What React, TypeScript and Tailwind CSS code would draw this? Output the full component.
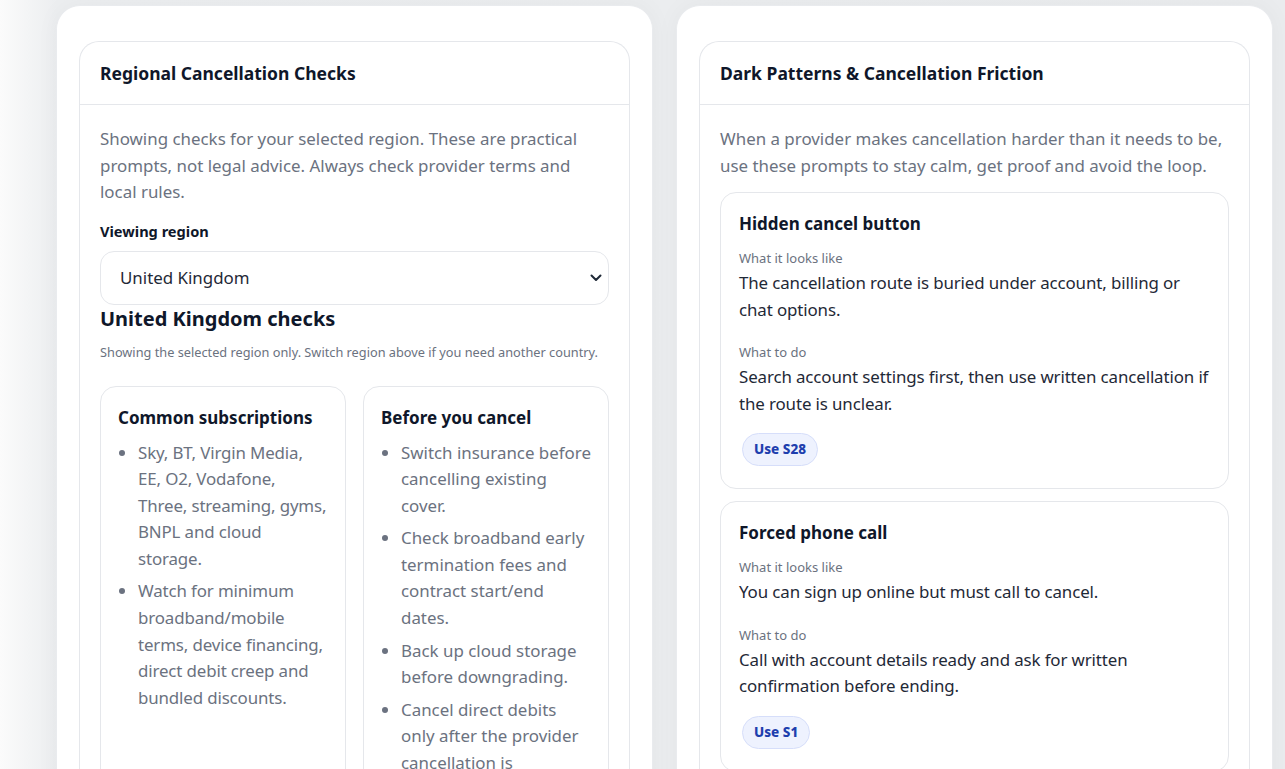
import React from "react";

const FONT = { fontFamily: '"Noto Sans", "Open Sans", Arial, sans-serif' };

function Chevron() {
  return (
    <svg width="12" height="8" viewBox="0 0 12 8" fill="none" className="shrink-0">
      <path d="M1.5 1.5 L6 6 L10.5 1.5" stroke="#1f2937" strokeWidth="2" strokeLinecap="round" strokeLinejoin="round" />
    </svg>
  );
}

function Badge({ label }: { label: string }) {
  return (
    <span className="ml-[3px] inline-flex h-[33px] items-center rounded-full border border-[#d6defa] bg-[#eef2fe] px-[11px] text-[13.5px] font-extrabold text-[#1e3fae]">
      {label}
    </span>
  );
}

function PatternCard({ title, looks, todo, badge }: { title: string; looks: string; todo: string; badge: string }) {
  return (
    <div className="rounded-[16px] border border-[#e5e7eb] bg-white px-[18px] pt-[19px] pb-[22px]">
      <h4 className="text-[17px] font-bold leading-[24px] text-[#0f172a]">{title}</h4>
      <div className="mt-[13px] text-[13px] leading-[18px] text-[#6b7280]">What it looks like</div>
      <p className="mt-[3px] text-[16.9px] leading-[26.5px] tracking-[-0.12px] text-[#1f2937]">{looks}</p>
      <div className="mt-[20px] text-[13px] leading-[18px] text-[#6b7280]">What to do</div>
      <p className="mt-[3px] text-[16.9px] leading-[26.5px] tracking-[-0.12px] text-[#1f2937]">{todo}</p>
      <div className="mt-[16px]">
        <Badge label={badge} />
      </div>
    </div>
  );
}

function ListCard({ title, items, tight }: { title: string; items: string[]; tight?: boolean }) {
  return (
    <div className="rounded-[16px] border border-[#e5e7eb] bg-white px-[17px] pt-[18px] pb-[24px]">
      <h4 className="text-[17px] font-bold leading-[26px] text-[#0f172a]">{title}</h4>
      <ul
        className={
          tight
            ? "mt-[9px] flex list-disc flex-col gap-[6px] pl-[20px] text-[16.9px] leading-[26.6px] tracking-[-0.14px] text-[#6b7280] marker:text-[#6b7280]"
            : "mt-[9px] flex list-disc flex-col gap-[6px] pl-[20px] text-[16.9px] leading-[26.6px] text-[#6b7280] marker:text-[#6b7280]"
        }
      >
        {items.map((t) => (
          <li key={t}>{t}</li>
        ))}
      </ul>
    </div>
  );
}

function Panel({ title, children }: { title: string; children: React.ReactNode }) {
  return (
    <section className="rounded-t-[24px] border border-b-0 border-[#e9ebee] bg-white px-[22px] pt-[35px] shadow-[0_0_24px_rgba(0,0,0,0.04)]">
      <div className="h-full rounded-t-[20px] border border-b-0 border-[#e5e7eb] bg-white">
        <div className="flex h-[63px] items-center border-b border-[#e5e7eb] px-[20px]">
          <h3 className="text-[17.5px] font-bold text-[#0f172a]">{title}</h3>
        </div>
        <div className="px-[20px] pt-[21px]">{children}</div>
      </div>
    </section>
  );
}

export default function App() {
  return (
    <div
      style={FONT}
      className="grid h-[769px] grid-cols-2 gap-[23px] overflow-hidden bg-[linear-gradient(90deg,#fbfbfb_0px,#eceef0_56px,#eaecee_100%)] pl-[56px] pr-[12px] pt-[5px]"
    >
      <Panel title="Regional Cancellation Checks">
        <p className="text-[16.9px] leading-[26.5px] text-[#6b7280]">
          Showing checks for your selected region. These are practical prompts, not legal advice. Always check provider terms and local rules.
        </p>
        <label className="mt-[15px] block text-[14.6px] font-bold leading-[20px] text-[#0f172a]">Viewing region</label>
        <div className="mt-[10px] flex h-[54px] items-center justify-between rounded-[14px] border border-[#e5e7eb] bg-white pl-[19px] pr-[6px]">
          <span className="text-[16.9px] text-[#1f2937]">United Kingdom</span>
          <Chevron />
        </div>
        <h3 className="text-[20px] font-bold leading-[28px] text-[#0f172a]">United Kingdom checks</h3>
        <p className="mt-[9px] text-[12.75px] leading-[20px] text-[#6b7280]">
          Showing the selected region only. Switch region above if you need another country.
        </p>
        <div className="mt-[24px] grid grid-cols-2 gap-[17px]">
          <ListCard
            tight
            title="Common subscriptions"
            items={[
              "Sky, BT, Virgin Media, EE, O2, Vodafone, Three, streaming, gyms, BNPL and cloud storage.",
              "Watch for minimum broadband/mobile terms, device financing, direct debit creep and bundled discounts.",
            ]}
          />
          <ListCard
            title="Before you cancel"
            items={[
              "Switch insurance before cancelling existing cover.",
              "Check broadband early termination fees and contract start/end dates.",
              "Back up cloud storage before downgrading.",
              "Cancel direct debits only after the provider cancellation is confirmed.",
            ]}
          />
        </div>
      </Panel>
      <Panel title="Dark Patterns & Cancellation Friction">
        <p className="text-[16.9px] leading-[26.5px] text-[#6b7280]">
          When a provider makes cancellation harder than it needs to be, use these prompts to stay calm, get proof and avoid the loop.
        </p>
        <div className="mt-[13px] flex flex-col gap-[12px]">
          <PatternCard
            title="Hidden cancel button"
            looks="The cancellation route is buried under account, billing or chat options."
            todo="Search account settings first, then use written cancellation if the route is unclear."
            badge="Use S28"
          />
          <PatternCard
            title="Forced phone call"
            looks="You can sign up online but must call to cancel."
            todo="Call with account details ready and ask for written confirmation before ending."
            badge="Use S1"
          />
        </div>
      </Panel>
    </div>
  );
}
